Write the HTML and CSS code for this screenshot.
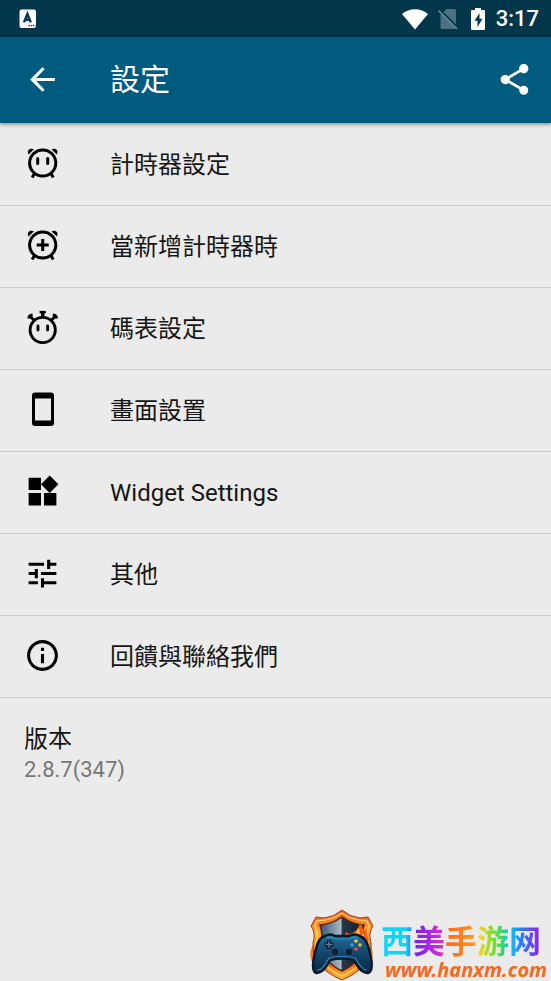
FILE: index.html
```html
<!DOCTYPE html>
<html lang="zh-Hant">

<head>
    <meta charset="UTF-8">
    <meta name="viewport" content="width=device-width, initial-scale=1.0">
    <title>設定</title>

    <link rel="stylesheet" href="styles.css">
</head>

<body>
    <div class="statusbar">
        <svg class="status_icon keyboard" viewBox="0 0 18 20">
            <rect x="0.5" y="0.5" width="16.5" height="18.5" rx="2" fill="#fff" />
            <path d="M5 13.400L8.400 5l3.400 8.400M6.300 10.800h4.400" fill="none" stroke="#02364b" stroke-width="2.400" />
            <path d="M9.500 16.700h7" stroke="#02364b" stroke-width="1.300" stroke-dasharray="1.400 .8" />
        </svg>
        <svg class="status_icon wifi" viewBox="0 0 28 22">
            <path d="M14 21.500L1 6C8-.4 20-.4 27 6z" fill="#fff" />
        </svg>
        <svg class="status_icon sim" viewBox="0 0 20 22">
            <path d="M8.500 1h8q1.500 0 1.500 1.500v17q0 1.500-1.500 1.500H4q-1.500 0-1.500-1.500V7z" fill="#4d7181" />
            <path d="M1.500 1.500L20 20" stroke="#02364b" stroke-width="2" />
            <path d="M.5 2.500l18.500 18.500" stroke="#6a8894" stroke-width="1.600" />
        </svg>
        <svg class="status_icon battery" viewBox="0 0 16 22">
            <path d="M5 0h6v2h3q1 0 1 1v18q0 1-1 1H2q-1 0-1-1V3q0-1 1-1h3z" fill="#fff" />
            <path d="M9.500 5L4.500 12.800h3V19l5-8.200h-3z" fill="#02364b" />
        </svg>
        <time class="clock">3:17</time>
    </div>

    <header class="appbar">
        <button type="button" class="icon_btn" aria-label="返回">
            <svg class="icon" viewBox="0 0 24 24">
                <path d="M20 11H7.830l5.590-5.590L12 4l-8 8 8 8 1.410-1.410L7.830 13H20v-2z" />
            </svg>
        </button>
        <h1>設定</h1>
        <button type="button" class="icon_btn" aria-label="分享">
            <svg class="icon" viewBox="0 0 24 24">
                <path d="M18 16.080c-.76 0-1.440.3-1.960.77L8.910 12.700c.05-.23.09-.46.09-.7s-.04-.47-.09-.7l7.050-4.110c.54.5 1.250.81 2.040.81 1.660 0 3-1.340 3-3s-1.340-3-3-3-3 1.340-3 3c0 .24.04.47.09.7L8.040 9.810C7.500 9.310 6.790 9 6 9c-1.660 0-3 1.340-3 3s1.340 3 3 3c.79 0 1.500-.31 2.040-.81l7.120 4.160c-.05.21-.08.43-.08.65 0 1.610 1.310 2.920 2.920 2.920s2.920-1.310 2.920-2.920-1.310-2.920-2.920-2.920z" />
            </svg>
        </button>
    </header>

    <main>
        <nav class="settings">
            <a class="row" href="#timer">
                <svg class="icon" viewBox="0 0 37 37">
                    <g fill="none" stroke="#000">
                        <circle cx="18.700" cy="18" r="13.100" stroke-width="3" />
                        <path d="M10.600 28.500l-2.500 4M26.800 28.500l2.500 4" stroke-width="3" />
                        <path d="M13.700 13.500v5M23.700 13.500v5" stroke-width="3" stroke-linecap="round" />
                    </g>
                    <path d="M4.500 9.500C2.500 5.500 5.500 2.500 10 4.300zM32.900 9.500C34.900 5.500 31.900 2.500 27.400 4.300z" />
                </svg>
                <span>計時器設定</span>
            </a>
            <a class="row" href="#new-timer">
                <svg class="icon" viewBox="0 0 37 37">
                    <g fill="none" stroke="#000">
                        <circle cx="18.700" cy="18" r="13.100" stroke-width="3" />
                        <path d="M10.600 28.500l-2.500 4M26.800 28.500l2.500 4" stroke-width="3" />
                        <path d="M18.700 12v12M12.700 18h12" stroke-width="3" />
                    </g>
                    <path d="M4.500 9.500C2.500 5.500 5.500 2.500 10 4.300zM32.900 9.500C34.900 5.500 31.900 2.500 27.400 4.300z" />
                </svg>
                <span>當新增計時器時</span>
            </a>
            <a class="row" href="#stopwatch">
                <svg class="icon" viewBox="0 0 37 37">
                    <g fill="none" stroke="#000">
                        <circle cx="18.700" cy="21" r="12.600" stroke-width="2.900" />
                        <path d="M15.600 3.100h6.200" stroke-width="2.400" />
                        <path d="M18.700 3v5" stroke-width="3.400" />
                        <path d="M6 7.500l4.500 4M31.400 7.500l-4.500 4" stroke-width="2.800" />
                        <path d="M5 9.500Q4.800 6.500 8.600 6M32.400 9.500Q32.600 6.500 28.800 6" stroke-width="3" />
                        <path d="M14 17v4M23.600 17v4" stroke-width="2.900" stroke-linecap="round" />
                    </g>
                </svg>
                <span>碼表設定</span>
            </a>
            <a class="row" href="#screen">
                <svg class="icon" viewBox="0 0 37 37">
                    <path fill-rule="evenodd" d="M11 1.500h16q3 0 3 3v27.500q0 3-3 3H11q-3 0-3-3V4.500q0-3 3-3zM11 7.500v22h16v-22z" />
                </svg>
                <span>畫面設置</span>
            </a>
            <a class="row" href="#widget">
                <svg class="icon" viewBox="0 0 24 24">
                    <path d="M13 13v8h8v-8h-8zM3 21h8v-8H3v8zM3 3v8h8V3H3zm13.660-1.310L11 7.340 16.660 13l5.660-5.660-5.660-5.650z" />
                </svg>
                <span>Widget Settings</span>
            </a>
            <a class="row" href="#other">
                <svg class="icon" viewBox="0 0 24 24">
                    <path d="M3 17v2h6v-2H3zM3 5v2h10V5H3zm10 16v-2h8v-2h-8v-2h-2v6h2zM7 9v2H3v2h4v2h2V9H7zm14 4v-2H11v2h10zm-6-4h2V7h4V5h-4V3h-2v6z" />
                </svg>
                <span>其他</span>
            </a>
            <a class="row" href="#contact">
                <svg class="icon" viewBox="0 0 24 24">
                    <path d="M11 17h2v-6h-2v6zm1-15C6.480 2 2 6.480 2 12s4.480 10 10 10 10-4.480 10-10S17.520 2 12 2zm0 18c-4.410 0-8-3.590-8-8s3.590-8 8-8 8 3.590 8 8-3.590 8-8 8zM11 9h2V7h-2v2z" />
                </svg>
                <span>回饋與聯絡我們</span>
            </a>
        </nav>

        <section class="version">
            <h2>版本</h2>
            <p>2.8.7(347)</p>
        </section>
    </main>

    <footer class="site">
        <svg class="site_logo" viewBox="0 0 66 72">
            <defs>
                <linearGradient id="rim" x1="0" y1="0" x2="0" y2="1">
                    <stop offset="0" stop-color="#f0521d" />
                    <stop offset=".35" stop-color="#ffb02e" />
                    <stop offset=".7" stop-color="#ed5a18" />
                    <stop offset="1" stop-color="#ffb52c" />
                </linearGradient>
                <linearGradient id="steel" x1="0" y1="0" x2="1" y2="0">
                    <stop offset="0" stop-color="#355570" />
                    <stop offset=".48" stop-color="#a9bac6" />
                    <stop offset=".5" stop-color="#26384a" />
                    <stop offset="1" stop-color="#121a28" />
                </linearGradient>
                <linearGradient id="pad" x1="0" y1="0" x2="0" y2="1">
                    <stop offset="0" stop-color="#246f9b" />
                    <stop offset=".5" stop-color="#12466c" />
                    <stop offset="1" stop-color="#0b2744" />
                </linearGradient>
            </defs>
            <path d="M4 36q-5 8-1 17l8 7-2-15zM61 35q5 9 1 18l-8 8 3-17z" fill="#f77a20" />
            <path d="M33 1q8 7 18 8l8-1 5 9q-5 7-2 17 2 24-29 37Q2 58 4 34q3-10-2-17l5-9 8 1q10-1 18-8z" fill="url(#rim)" stroke="#a3361a" />
            <path d="M33 4q9 7 25 8l2 5q-4 8-1 17 1 21-26 33Q6 55 7 34q3-9-1-17l2-5q16-1 25-8z" fill="none" stroke="#ffd062" stroke-width="1.500" />
            <path d="M33 8q10 7 22 8-3 9-1 18 0 18-21 28-21-10-21-28 2-9-1-18 12-1 22-8z" fill="url(#steel)" stroke="#5a2418" stroke-width="1.500" />
            <path d="M28 32q8-3 9-9l3 2q9-2 11-11 4 4 3 9l4-4q-1 7 1 9 2 5-3 9H28z" fill="#f15a17" />
            <path d="M34 31q4-1 6-5l3 1q5-3 6-8 3 4 1 8l5-2q0 6-6 9z" fill="#ffc13a" />
            <path d="M16 27q5-3 10 0h14q6-3 11 0 6 2 9 13 6 22-1 24-7 1-14-13-12-3-24 0-7 14-14 13-6-3 0-24 2-11 9-13z" fill="url(#pad)" stroke="#08182d" stroke-width="2.500" />
            <path d="M18 29q4-2 8 1h14q5-3 9-1M8 61q5 1 12-12 13-3 26 0 7 12 12 12" fill="none" stroke="#2794c3" stroke-width="1.200" />
            <path d="M20 31v9M15.500 35.500h9" stroke="#071a2d" stroke-width="4" />
            <path d="M20 32v7M16.500 35.500h7" stroke="#57788f" stroke-width="1.500" />
            <circle cx="26" cy="43" r="4" fill="#0b213a" stroke="#28516e" />
            <circle cx="40" cy="43" r="4" fill="#0b213a" stroke="#28516e" />
            <circle cx="47" cy="32" r="1.800" fill="#ffc43b" />
            <circle cx="43" cy="36" r="1.800" fill="#26a7d7" />
            <circle cx="51" cy="36" r="1.800" fill="#ffb13c" />
            <circle cx="47" cy="40" r="1.800" fill="#f24d57" />
        </svg>
        <div class="site_text">
            <strong class="site_name" lang="zh-Hans">西美手游网</strong>
            <a class="site_url" href="#site">www.hanxm.com</a>
        </div>
    </footer>
</body>

</html>
```

FILE: styles.css
```css
* {
    box-sizing: border-box;
}

body {
    margin: 0;
    min-height: 100vh;
    display: flex;
    flex-direction: column;
    background: #ebebeb;
    color: #151515;
    font-family: Roboto, "Noto Sans CJK TC", sans-serif;
}

h1, h2, p {
    margin: 0;
    font-weight: 400;
}

/* status bar */
.statusbar {
    height: 37px;
    padding: 0 12px 0 19px;
    display: flex;
    align-items: center;
    background: #02364b;
    color: white;
}

.status_icon {
    height: 22px;
    flex: none;
}

.keyboard {
    width: 18px;
    height: 20px;
    margin-right: auto;
}

.wifi {
    width: 28px;
    margin-right: 9px;
}

.sim {
    width: 20px;
    margin-right: 12px;
}

.battery {
    width: 16px;
    margin-right: 10px;
}

.clock {
    font-size: 22px;
    font-weight: 500;
    line-height: 28px;
}

/* app bar */
.appbar {
    height: 86px;
    padding: 0 18px 0 24px;
    display: flex;
    align-items: center;
    background: #005b7f;
    color: white;
    box-shadow: 0 1px 4px rgba(0, 0, 0, .5);
}

.appbar h1 {
    flex: 1;
    margin-left: 49px;
    font-size: 30px;
    line-height: 34px;
}

.icon_btn {
    padding: 0 0 2px;
    border: none;
    background: none;
    color: inherit;
}

.icon {
    display: block;
    width: 37px;
    height: 37px;
    flex: none;
    fill: currentColor;
}

/* list */
.settings {
    padding-top: 1px;
}

.row {
    height: 82px;
    padding: 0 24px;
    display: flex;
    align-items: center;
    gap: 49px;
    border-bottom: 1px solid #cacaca;
    color: inherit;
    font-size: 24px;
    line-height: 28px;
    text-decoration: none;
}

.row .icon {
    margin-bottom: 2px;
    color: black;
}

.version {
    padding: 24px;
}

.version h2 {
    font-size: 24px;
    line-height: 34px;
}

.version p {
    color: #777;
    font-size: 22px;
    line-height: 28px;
}

/* site mark */
.site {
    margin-top: auto;
    padding-right: 6px;
    display: flex;
    align-items: flex-end;
    justify-content: flex-end;
    gap: 6px;
}

.site_logo {
    width: 66px;
    height: 72px;
}

.site_text {
    width: 164px;
    display: flex;
    flex-direction: column;
    align-items: flex-start;
}

.site_name {
    font-family: "Noto Sans CJK SC", sans-serif;
    font-size: 32px;
    font-weight: 700;
    line-height: 40px;
    color: transparent;
    background: linear-gradient(90deg, #12d5f5 0 15%, #2a8af8 19%, #7a22ee 22%, #d42ad0 37%, #ff6a18 41%, #ff9020 57%, #ffd21f 61%, #6ee02c 71%, #28d488 77%, #10c8f8 80%, #2a7cf8 88%, #8a28f0 98%);
    -webkit-background-clip: text;
    background-clip: text;
}

.site_url {
    padding-left: 4px;
    color: #f26a21;
    font-family: "Noto Sans", sans-serif;
    font-size: 20px;
    font-style: italic;
    font-weight: 700;
    line-height: 22px;
    text-decoration: none;
}
```
